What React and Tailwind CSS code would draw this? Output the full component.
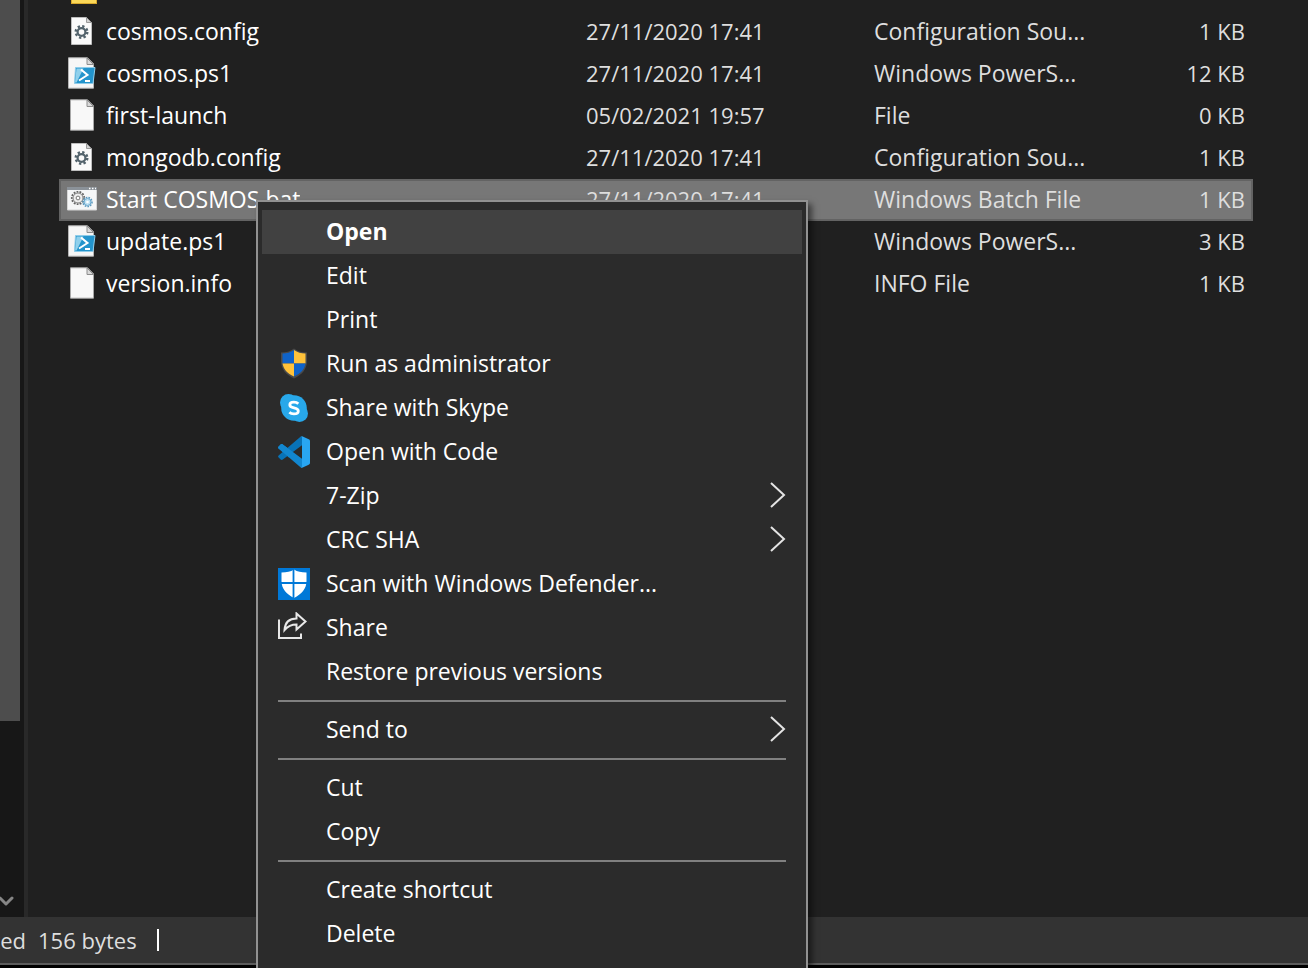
import { useState } from 'react';
import { ChevronDown } from 'lucide-react';

const files = [
  { name: 'cosmos.config', date: '27/11/2020 17:41', type: 'Configuration Sou...', size: '1 KB', icon: 'config' },
  { name: 'cosmos.ps1', date: '27/11/2020 17:41', type: 'Windows PowerS...', size: '12 KB', icon: 'powershell' },
  { name: 'first-launch', date: '05/02/2021 19:57', type: 'File', size: '0 KB', icon: 'blank' },
  { name: 'mongodb.config', date: '27/11/2020 17:41', type: 'Configuration Sou...', size: '1 KB', icon: 'config' },
  { name: 'Start COSMOS.bat', date: '27/11/2020 17:41', type: 'Windows Batch File', size: '1 KB', icon: 'batch' },
  { name: 'update.ps1', date: '27/11/2020 17:41', type: 'Windows PowerS...', size: '3 KB', icon: 'powershell' },
  { name: 'version.info', date: '27/11/2020 17:41', type: 'INFO File', size: '1 KB', icon: 'blank' },
];

// each group is divided by a separator line
const menuGroups = [
  [
    { label: 'Open', bold: true },
    { label: 'Edit' },
    { label: 'Print' },
    { label: 'Run as administrator', icon: 'shield' },
    { label: 'Share with Skype', icon: 'skype' },
    { label: 'Open with Code', icon: 'code' },
    { label: '7-Zip', submenu: true },
    { label: 'CRC SHA', submenu: true },
    { label: 'Scan with Windows Defender...', icon: 'defender' },
    { label: 'Share', icon: 'share' },
    { label: 'Restore previous versions' },
  ],
  [{ label: 'Send to', submenu: true }],
  [{ label: 'Cut' }, { label: 'Copy' }],
  [{ label: 'Create shortcut' }, { label: 'Delete' }, { label: 'Rename' }],
];

function FileIcon({ kind }) {
  return (
    <svg viewBox="0 0 32 32" className="h-8 w-8 shrink-0" aria-hidden="true">
      {kind === 'folder' && (
        <>
          <path d="M4 6h10l3 4h13v22H4z" fill="#d9a92c" />
          <path d="M5 12h24v19H5z" fill="#fbd858" />
        </>
      )}
      {kind === 'blank' && (
        <>
          <path d="M4.5.8h17l6 6v24.4h-23z" fill="#f8f8f8" stroke="#a8a8a8" />
          <path d="M21 1v6.5h6.500z" fill="#d9d9d9" stroke="#8d8d8d" />
        </>
      )}
      {kind === 'config' && (
        <>
          <path d="M5.500 2.500h15l5 5v22h-20z" fill="#fafafa" stroke="#bdbdbd" />
          <path d="M20.500 2.500v5h5z" fill="#d2d2d2" stroke="#9a9a9a" />
          <circle cx="15.500" cy="17" r="5.800" fill="none" stroke="#53636c" strokeWidth="2.400" strokeDasharray="2.300 2.255" />
          <circle cx="15.500" cy="17" r="3.900" fill="none" stroke="#53636c" strokeWidth="2.200" />
        </>
      )}
      {kind === 'powershell' && (
        <>
          <path d="M2.500.8h19l6 6v24.400h-25z" fill="#f6f6f6" stroke="#b5b5b5" />
          <path d="M21 1v6.500h6.500z" fill="#d9d9d9" stroke="#8d8d8d" />
          <path d="M9.500 10.500h19.500L27 26.500H8.500z" fill="#2394cc" stroke="#8ecbe8" />
          <path d="M10.500 11.500h7L10.500 25.500H9z" fill="#8fd0ec" />
          <path d="M15 12.500l6.500 5.500-8.500 5.500M19 24h5" fill="none" stroke="#fff" strokeWidth="2" />
        </>
      )}
      {kind === 'batch' && (
        <>
          <path d="M1.500 4.500h29v22.500h-29z" fill="#f5f6f7" stroke="#d5d5d5" />
          <path d="M1 4h30v3H1z" fill="#8b9299" />
          <path d="M23 5.500h1.500M26 5.500h1.500M29 5.500h1" stroke="#fff" strokeWidth="1.500" />
          <circle cx="12" cy="15" r="6.200" fill="none" stroke="#666" strokeWidth="1.800" strokeDasharray="1.800 1.200" />
          <circle cx="12" cy="15" r="5" fill="#eee" stroke="#808080" />
          <circle cx="12" cy="15" r="1.900" fill="#fff" stroke="#777" />
          <circle cx="21.500" cy="19" r="4.500" fill="none" stroke="#5c98bd" strokeWidth="1.600" strokeDasharray="1.600 1.100" />
          <circle cx="21.500" cy="19" r="3.500" fill="#bfe0f2" stroke="#6aa9cf" />
          <circle cx="21.500" cy="19" r="1.300" fill="#fff" />
        </>
      )}
    </svg>
  );
}

function MenuIcon({ kind }) {
  return (
    <svg viewBox="0 0 32 32" className="h-8 w-8" aria-hidden="true">
      {kind === 'shield' && (
        <>
          <path d="M16 .5c4 3 8 4 13 4v8c0 9-5 14-13 18C8 26.500 3 21.500 3 12.500v-8c5 0 9-1 13-4z" fill="#4a4a4a" />
          <path d="M16 2v13.500H4.500v-10c4.500 0 8-1 11.500-3.500z" fill="#0f63c9" />
          <path d="M16 2v13.500h11.500v-10c-4.500 0-8-1-11.500-3.500z" fill="#ffc23a" />
          <path d="M4.500 15.500H16v13c-7-3-10.500-7.500-11.500-13z" fill="#ffc23a" />
          <path d="M27.500 15.500H16v13c7-3 10.500-7.500 11.500-13z" fill="#0f63c9" />
        </>
      )}
      {kind === 'skype' && (
        <>
          <circle cx="10.500" cy="10.500" r="8.500" fill="#28a8ea" />
          <circle cx="21.500" cy="21.500" r="8.500" fill="#28a8ea" />
          <circle cx="16" cy="16" r="12.800" fill="#28a8ea" />
          <path
            d="M20.300 11.700c-1.100-1.100-2.700-1.500-4.400-1.500-2.400 0-4.100 1-4.100 2.800 0 4 8.500 1.900 8.500 5.900 0 1.900-1.900 2.900-4.400 2.900-1.900 0-3.400-.5-4.500-1.600"
            fill="none"
            stroke="#fff"
            strokeWidth="2.800"
          />
        </>
      )}
      {kind === 'code' && (
        <>
          <path d="M.4 10.800l2.200-2.300c.7-.6 1.500-.6 2.200-.1L24 22.800V31.500c-.8.200-1.500-.1-2.100-.7L.6 12.600c-.6-.5-.6-1.300-.2-1.800z" fill="#1287d0" />
          <path d="M.4 21.200l2.200 2.300c.7.6 1.500.6 2.200.1L24 9.200V.5c-.8-.2-1.500.1-2.100.7L.6 19.400c-.6.5-.6 1.300-.2 1.800z" fill="#0873b8" />
          <path d="M.6 12.600L11 21.500l4-5.500L4.800 8.400c-.7-.5-1.500-.5-2.200.1L.4 10.800c-.4.5-.4 1.300.2 1.800z" fill="#1287d0" />
          <path d="M22 31.200c1 .7 1.700.8 2.700.4l6-2.900c.9-.5 1.300-1.100 1.300-2V5.300c0-.9-.4-1.600-1.300-2l-6-2.900c-1-.4-1.800-.2-2.700.5 1-.7 2-.2 2 1v28.200c0 1.300-1 1.800-2 1.100z" fill="#29a6f2" />
        </>
      )}
      {kind === 'defender' && (
        <>
          <path d="M0 0h32v32H0z" fill="#0078d7" />
          <path d="M16 1.500c3.500 2.200 7 3 12.500 3v8.500c0 8-5 13-12.500 17C8.500 26 3.500 21 3.500 13V4.500c5.500 0 9-.8 12.500-3z" fill="#fff" />
          <path d="M15.500 0v32M2 15h28" stroke="#0078d7" strokeWidth="1.800" />
        </>
      )}
      {kind === 'share' && (
        <>
          <path d="M1 7.500V26h22v-4.500" fill="none" stroke="#e8e8e8" strokeWidth="2" />
          <path d="M6.500 18C7 10.500 11 6.500 18.500 6.500v-5l9 8-9 8v-5c-5.500 0-9 2-12 5.500z" fill="none" stroke="#e8e8e8" strokeWidth="2" />
        </>
      )}
    </svg>
  );
}

function ContextMenu() {
  const [active, setActive] = useState('Open');

  return (
    <div
      role="menu"
      className="absolute left-64 top-[200px] w-[552px] border-2 border-[#919191] bg-[#2b2b2b] px-1 py-2 text-white shadow-[4px_4px_6px_rgba(0,0,0,0.5)]"
    >
      {menuGroups.map((group, i) => (
        <div key={i}>
          {i > 0 && <hr className="mx-4 my-1.5 border-t-2 border-[#808080]" />}
          {group.map((item) => (
            <button
              key={item.label}
              role="menuitem"
              onMouseEnter={() => setActive(item.label)}
              className={`flex h-11 w-full items-center gap-4 px-4 text-left ${item.bold ? 'font-bold' : ''} ${
                active === item.label ? 'bg-[#414141]' : ''
              }`}
            >
              <span className="h-8 w-8 shrink-0">{item.icon && <MenuIcon kind={item.icon} />}</span>
              <span className="flex-1 pb-0.5">{item.label}</span>
              {item.submenu && (
                <svg viewBox="0 0 16 28" className="h-7 w-4" aria-hidden="true">
                  <path d="M1 1l13 12L1 25" fill="none" stroke="#e4e4e4" strokeWidth="2" />
                </svg>
              )}
            </button>
          ))}
        </div>
      ))}
    </div>
  );
}

export default function App() {
  const [selected] = useState('Start COSMOS.bat');

  return (
    <div className="relative flex h-screen flex-col overflow-hidden bg-[#202020] font-['Open_Sans','Noto_Sans',sans-serif] text-[23px] leading-8 text-white">
      <div className="flex min-h-0 flex-1">
        {/* Scrollbar of the navigation pane */}
        <div className="flex w-7 shrink-0 flex-col border-r-4 border-[#292929] bg-[#171717]">
          <div className="w-5 flex-1 bg-[#4d4d4d]" />
          <div className="flex h-[196px] items-end">
            <button aria-label="Scroll down" className="-ml-1.5 pb-1 text-[#868686]">
              <ChevronDown size={24} strokeWidth={3} />
            </button>
          </div>
        </div>

        <main className="min-w-0 flex-1 overflow-hidden pl-[31px] pr-[55px]">
          <table className="-mt-[31px] w-full table-fixed border-collapse">
            <colgroup>
              <col />
              <col className="w-[288px]" />
              <col className="w-[240px]" />
              <col className="w-[147px]" />
            </colgroup>
            <tbody>
              <tr className="h-[42px]">
                <td className="px-2 align-top" colSpan={4}>
                  <div className="pt-[3px]">
                    <FileIcon kind="folder" />
                  </div>
                </td>
              </tr>
              {files.map((file) => (
                <tr
                  key={file.name}
                  className={`h-[42px] ${
                    file.name === selected ? 'bg-[#777777] outline-2 -outline-offset-2 outline-[#636363]' : ''
                  }`}
                >
                  <td className="p-0 pb-0.5 pl-[7px]">
                    <div className="flex items-center gap-2">
                      <FileIcon kind={file.icon} />
                      <span className="truncate">{file.name}</span>
                    </div>
                  </td>
                  <td className="px-2 pb-0.5 text-[22px] text-[#dedede]">{file.date}</td>
                  <td className="whitespace-nowrap px-2 pb-0.5 text-[#dedede]">{file.type}</td>
                  <td className="px-2 pb-0.5 text-right text-[22px] text-[#dedede]">{file.size}</td>
                </tr>
              ))}
            </tbody>
          </table>
        </main>
      </div>

      <footer className="flex h-[51px] shrink-0 flex-col bg-black">
        <div className="flex h-12 items-center border-b-2 border-[#5c5c5c] bg-[#333333] text-[22px] text-[#dedede]">
          <span className="flex w-[26px] justify-end overflow-hidden whitespace-nowrap">1 item selected</span>
          <span className="ml-3">156 bytes</span>
          <span className="ml-5 h-[22px] w-0.5 bg-white" />
        </div>
      </footer>

      <ContextMenu />
    </div>
  );
}
